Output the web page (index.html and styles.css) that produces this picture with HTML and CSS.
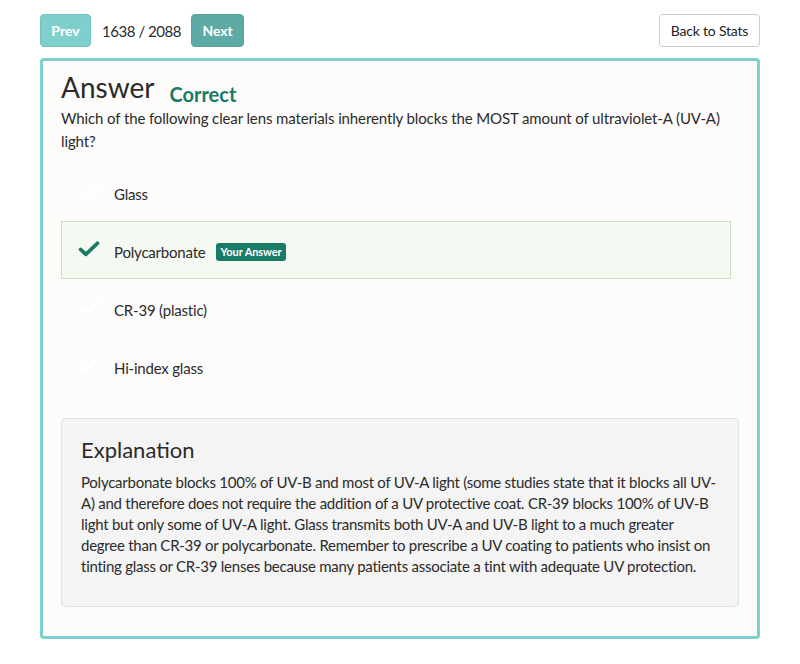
FILE: index.html
```html
<!DOCTYPE html>
<html>
<head>
<meta charset="utf-8">
<link rel="stylesheet" href="styles.css">
</head>
<body>
<div class="page">
  <div class="topbar">
    <div class="pager">
      <button class="btn btn-prev">Prev</button>
      <span class="count">1638 / 2088</span>
      <button class="btn btn-next">Next</button>
    </div>
    <button class="btn btn-back">Back to Stats</button>
  </div>
  <div class="card">
    <div class="title-row">
      <h1 class="title">Answer</h1>
      <span class="status">Correct</span>
    </div>
    <p class="question">Which of the following clear lens materials inherently blocks the MOST amount of ultraviolet-A (UV-A) light?</p>
    <ul class="options">
      <li class="option"><span class="check check-hidden"><svg viewBox="0 0 24 18" width="22" height="16"><path d="M2 9.5 L8.5 15.5 L22 2.5" fill="none" stroke="currentColor" stroke-width="4.2" stroke-linecap="round" stroke-linejoin="round"/></svg></span><span class="opt-text">Glass</span></li>
      <li class="option option-selected"><span class="check"><svg viewBox="0 0 24 18" width="22" height="16"><path d="M2.5 9.5 L8.5 15 L21.5 2.5" fill="none" stroke="currentColor" stroke-width="4.2" stroke-linecap="round" stroke-linejoin="round"/></svg></span><span class="opt-text">Polycarbonate</span><span class="badge">Your Answer</span></li>
      <li class="option"><span class="check check-hidden"><svg viewBox="0 0 24 18" width="22" height="16"><path d="M2 9.5 L8.5 15.5 L22 2.5" fill="none" stroke="currentColor" stroke-width="4.2" stroke-linecap="round" stroke-linejoin="round"/></svg></span><span class="opt-text">CR-39 (plastic)</span></li>
      <li class="option"><span class="check check-hidden"><svg viewBox="0 0 24 18" width="22" height="16"><path d="M2 9.5 L8.5 15.5 L22 2.5" fill="none" stroke="currentColor" stroke-width="4.2" stroke-linecap="round" stroke-linejoin="round"/></svg></span><span class="opt-text">Hi-index glass</span></li>
    </ul>
    <div class="explanation">
      <h2 class="exp-title">Explanation</h2>
      <p class="exp-text">Polycarbonate blocks 100% of UV-B and most of UV-A light (some studies state that it blocks all UV-A) and therefore does not require the addition of a UV protective coat. CR-39 blocks 100% of UV-B light but only some of UV-A light. Glass transmits both UV-A and UV-B light to a much greater degree than CR-39 or polycarbonate. Remember to prescribe a UV coating to patients who insist on tinting glass or CR-39 lenses because many patients associate a tint with adequate UV protection.</p>
    </div>
  </div>
</div>
</body>
</html>
```

FILE: styles.css
```css
* { box-sizing: border-box; }
html, body {
  margin: 0;
  padding: 0;
  background: #ffffff;
}
body {
  font-family: "Lato", "Open Sans", sans-serif;
  color: #2b2b2b;
  font-size: 15px;
}
.page {
  width: 720px;
  margin: 0 0 0 40px;
  padding-top: 14px;
}
.topbar {
  display: flex;
  justify-content: space-between;
  align-items: center;
}
.pager {
  display: flex;
  align-items: center;
}
.btn {
  font-family: inherit;
  height: 33px;
  border-radius: 4px;
  font-size: 14px;
  padding: 0 12px;
  cursor: pointer;
}
.btn-prev {
  background: #7fcfcc;
  border: 1px solid #74c2bf;
  color: #ffffff;
  font-weight: 700;
  width: 51px;
  padding: 0;
}
.btn-next {
  background: #5eaba6;
  border: 1px solid #58a29d;
  color: #ffffff;
  font-weight: 700;
  width: 53px;
  padding: 0;
}
.count {
  margin: 0 10px 0 11px;
  font-size: 15px;
  letter-spacing: -0.45px;
  color: #2b2b2b;
}
.btn-back {
  background: #ffffff;
  border: 1px solid #cccccc;
  color: #222222;
  width: 101px;
  padding: 0;
  letter-spacing: -0.2px;
}
.card {
  margin-top: 11px;
  border: 3px solid #7fcfcc;
  border-radius: 4px;
  background: #fdfcfa;
  padding: 9px 18px 31px 18px;
  height: 581px;
}
.title-row {
  display: flex;
  align-items: baseline;
}
.title {
  margin: 0;
  font-size: 28px;
  font-weight: 400;
  line-height: 34px;
  color: #2b2b2b;
}
.status {
  margin-left: 15px;
  font-size: 20px;
  font-weight: 700;
  color: #1a7a66;
  position: relative;
  top: 4px;
}
.question {
  margin: 3px 0 0 0;
  line-height: 23px;
  letter-spacing: -0.12px;
}
.options {
  list-style: none;
  margin: 10px 8px 0 0;
  padding: 0;
  display: flex;
  flex-direction: column;
}
.option {
  display: flex;
  align-items: center;
  height: 58px;
  border: 1px solid transparent;
  padding-left: 16px;
}
.option-selected {
  background: #f4f9f2;
  border-color: #c9e1c4;
}
.check {
  width: 22px;
  height: 16px;
  color: #1a7a66;
  margin-right: 14px;
  display: flex;
  margin-top: -2px;
}
.check-hidden {
  color: #ffffff;
}
.opt-text {
  line-height: 20px;
  padding-top: 4px;
  letter-spacing: -0.2px;
}
.badge {
  margin-left: 10px;
  margin-top: 4px;
  background: #1a7a68;
  color: #ffffff;
  font-size: 11px;
  font-weight: 700;
  padding: 2px 5px;
  border-radius: 3px;
  line-height: 14px;
  letter-spacing: -0.1px;
}
.explanation {
  margin-top: 23px;
  background: #f4f4f4;
  border: 1px solid #e2e2e2;
  border-radius: 4px;
  padding: 17px 19px 26px 19px;
  height: 189px;
}
.exp-title {
  margin: 0;
  font-size: 22px;
  font-weight: 400;
  line-height: 28px;
  color: #2b2b2b;
}
.exp-text {
  margin: 8px 0 0 0;
  line-height: 21px;
  letter-spacing: -0.25px;
}
```
